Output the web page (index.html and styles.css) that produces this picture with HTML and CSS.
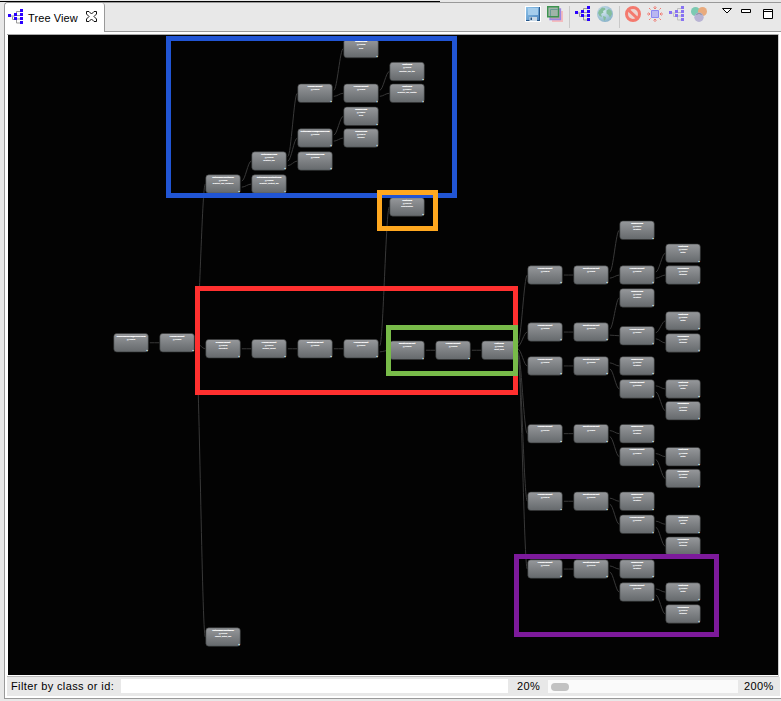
FILE: index.html
```html
<!DOCTYPE html>
<html lang="en">
<head>
<meta charset="utf-8">
<title>Tree View</title>
<link rel="stylesheet" href="styles.css">
</head>
<body>
<svg class="defs" aria-hidden="true">
  <defs>
    <linearGradient id="face" x1="0" y1="0" x2="0" y2="1"><stop offset="0" stop-color="#96989b"/><stop offset="1" stop-color="#65696c"/></linearGradient>
    <linearGradient id="disk" x1="0" y1="0" x2="1" y2="1"><stop offset="0" stop-color="#8fc4ea"/><stop offset="1" stop-color="#4a83bd"/></linearGradient>
    <radialGradient id="sea" cx=".4" cy=".35" r=".7"><stop offset="0" stop-color="#d2e6f0"/><stop offset="1" stop-color="#86b0c8"/></radialGradient>
    <symbol id="tree" viewBox="0 0 16 16">
      <path d="M3 7h4M4.500 7.500V10.500H7M8.500 6V2.500H13M8.500 10V14H13M9 6.500h4M9 10h4" fill="none" stroke="#999" stroke-width="1"/>
      <path d="M0 5h3v3H0zM6 4h3v3H6zM6 8h3v3H6zM12 0h3v3h-3zM12 4h3v3h-3zM12 8h3v3h-3zM12 12h3v3h-3z" fill="#2a00ff"/>
    </symbol>
  </defs>
</svg>
<div class="top-edge"></div>
<main class="panel">
  <header class="tabbar">
    <div class="tab">
      <svg class="ico" viewBox="0 0 16 16"><use href="#tree" width="16" height="16"/></svg>
      <span class="tab-title">Tree View</span>
      <svg class="close" viewBox="0 0 11 11"><path d="M.5.5h2.500l2.500 2.500L8 .5h2.500V3L8 5.500 10.500 8v2.500H8L5.500 8 3 10.500H.5V8L3 5.500.5 3z" fill="#fff" stroke="#111"/></svg>
    </div>
    <div class="tools">
      <svg class="ico" viewBox="0 0 16 16"><path d="M0 0h16v16H0z" fill="#fff"/><path d="M1 1h14v14H2.500L1 13.500z" fill="url(#disk)"/><path d="M1 14.500h14M14.500 1v14" stroke="#27598c"/><path d="M3 2h10v7H3z" fill="#a5cdec"/><path d="M4.500 11h7.500v4H4.500z" fill="#c8d8e6"/><path d="M5.500 11.500h1.500V14H5.500z" fill="#285483"/></svg>
      <svg class="ico layers" viewBox="0 0 16 16"><path d="M5 5h11v11H5z" fill="#f4bcbe"/><path d="M3 3h10.500v10.500H3z" fill="#b9a0b4" stroke="#9c86e4" stroke-width="1.300"/><path d="M.7.700h10.800v10H.7z" fill="#a0b4a8" stroke="#3c934f" stroke-width="1.400"/><path d="M3.500 10V3.500H11" fill="none" stroke="#6a9c94"/></svg>
      <i class="sep"></i>
      <svg class="ico" viewBox="0 0 16 16"><use href="#tree" width="16" height="16"/></svg>
      <svg class="ico globe" viewBox="0 0 16 16"><circle cx="8" cy="8" r="8" fill="url(#sea)"/><path d="M2 4.500l3-3 3 .5.500 1.500L6 5l.5 1.500L4 8l1 3-2.500-1L1 7zM9.500 4.500L12 3l2.500 2 .5 3-2 3.500-1.500-2.500-2-1.500zM6 10l3 1-.5 2.500L7 15z" fill="#84bd9c"/></svg>
      <i class="sep"></i>
      <svg class="ico" viewBox="0 0 16 16"><circle cx="8" cy="8" r="6.500" fill="#ecd5d1" stroke="#f4796e" stroke-width="3"/><path d="M3.500 4l9 8.500" stroke="#f4796e" stroke-width="3"/></svg>
      <svg class="ico" viewBox="0 0 16 16"><path d="M4.500 4.500h7v7h-7z" fill="#b9b7f0" stroke="#8b88f2"/><path d="M8 0v3M6.500 1.500L8 3l1.500-1.500M8 16v-3M6.500 14.500L8 13l1.500 1.500M0 8h3M1.500 6.500L3 8 1.500 9.500M16 8h-3M14.500 6.500L13 8l1.500 1.500M2 2l1.500 1.500M14 2l-1.500 1.500M2 14l1.500-1.500M14 14l-1.500-1.500" fill="none" stroke="#ef7d74"/></svg>
      <svg class="ico faded" viewBox="0 0 16 16"><use href="#tree" width="16" height="16"/></svg>
      <svg class="ico" viewBox="0 0 16 16"><circle cx="4.500" cy="5.500" r="4.500" fill="#7ccab2"/><circle cx="11.500" cy="5.500" r="4.500" fill="#e9ab7e"/><circle cx="8" cy="11.300" r="4.700" fill="#b8b3d4"/><path d="M4.500 8.700a4.500 4.500 0 0 1 7 0A4.500 4.500 0 0 1 8 7.700a4.500 4.500 0 0 1-3.500 1z" fill="#8a929c"/></svg>
      <svg class="win" viewBox="0 0 64 20"><path d="M6.500 2.500h9L11 7z M25.500 3.500h9v3h-9z M47.500 3.500h9v9h-9z M47.500 5.500h9" fill="#fff" stroke="#000"/></svg>
    </div>
  </header>
  <section class="canvas">
    <svg id="graph" viewBox="8 35 770 640"></svg>
  </section>
  <footer class="status">
    <label class="filter-label" for="filter">Filter by class or id:</label>
    <input class="filter" id="filter" type="text">
    <span class="zoom-min">20%</span>
    <div class="slider"><div class="thumb"></div></div>
    <span class="zoom-max">200%</span>
  </footer>
</main>
<script src="tree.js"></script>
</body>
</html>
```
FILE: styles.css
```css
* { box-sizing: border-box; }
body {
  margin: 0;
  height: 701px;
  overflow: hidden;
  display: flex;
  flex-direction: column;
  background: #e8e8e8;
  font: 11px "Liberation Sans", Arial, sans-serif;
  color: #000;
}
.defs { position: absolute; width: 0; height: 0; }
.top-edge { height: 2px; width: 440px; flex: none; border-bottom: 1px solid #000; }
.panel {
  height: 697px;
  margin-left: 4px;
  display: flex;
  flex-direction: column;
  background: #fff;
  border: 1px solid #999;
  border-right: 0;
  border-top-left-radius: 4px;
  padding: 0 1px 2px 2px;
}
.tabbar {
  height: 29px;
  flex: none;
  margin: 0 -1px 0 -2px;
  display: flex;
  background: #e8e8e8;
  border-bottom: 1px solid #999;
  border-top-left-radius: 4px;
}
.tab {
  width: 100px;
  height: 29px;
  flex: none;
  display: flex;
  align-items: center;
  padding: 0 0 2px 3px;
  background: #fff;
  border-right: 1px solid #999;
  border-radius: 4px 3px 0 0;
}
.ico { width: 16px; height: 16px; flex: none; display: block; }
.tab-title { width: 53px; margin: 3px 5px 0 4px; white-space: nowrap; letter-spacing: .1px; }
.close { width: 11px; height: 11px; }
.tools { margin-left: auto; display: flex; align-items: flex-start; padding-top: 3px; }
.tools .ico { margin-right: 6px; }
.sep { width: 1px; height: 22px; margin: 0 5px 0 0; background: #c9c9c9; }
.faded { opacity: .5; }
.win { width: 64px; height: 20px; margin: 0 1px 0 3px; flex: none; }
.canvas {
  width: 771px;
  height: 643px;
  flex: none;
  margin-top: 2px;
  padding-left: 1px;
  border-top: 1px solid #aaa;
  border-bottom: 1px solid #bbb;
  box-shadow: 1px 0 #ccc;
}
.canvas svg { display: block; width: 770px; height: 640px; background: #030303; }
.edge { fill: none; stroke: #383838; stroke-width: 1; }
.face { fill: url(#face); stroke: #303233; stroke-width: .6; }
.name { font-size: 2.3px; font-weight: bold; fill: #fff; stroke: #fff; stroke-width: .22; text-anchor: middle; }
.meta { font-size: 2px; fill: #fff; stroke: #fff; stroke-width: .12; text-anchor: middle; }
.index { font-size: 2.2px; fill: #d6e6ee; stroke: #d6e6ee; stroke-width: .3; text-anchor: end; }
.mark { fill: none; stroke-width: 5; }
.blue { stroke: #2155d4; }
.orange { stroke: #ffa81f; }
.red { stroke: #ff302f; }
.green { stroke: #78bb49; }
.purple { stroke: #7d1a9b; }
.status {
  flex: 1;
  display: flex;
  align-items: center;
  background: #e8e8e8;
  padding: 0 0 1px 4px;
  letter-spacing: .38px;
  white-space: nowrap;
}
.filter-label { width: 110px; flex: none; }
.filter { width: 387px; height: 14px; border: 0; padding: 0 2px; background: #fff; outline: 0; font: inherit; }
.zoom-min { width: 31px; margin-left: 9px; }
.slider { width: 190px; height: 13px; padding: 3px 3px 2px; background: #fafafa; }
.thumb { width: 18px; height: 8px; border-radius: 4px; background: #c2c2c2; }
.zoom-max { margin-left: 6px; }
```
FILE: tree.js
```js
const W = 34.5, H = 18.5;
// Each view: class name, column x, row y, id (optional), children.
const v = (name, x, y, id, ...kids) => ({ name, x, y, id, kids });

const row = (y, imgY, subY, textY, checkY) =>
  v("LinearLayout", 527.8, y, "",
    v("RelativeLayout", 573.8, y, "",
      v("ImageView", 619.8, imgY, "id/option"),
      v("LinearLayout", 619.8, subY, "",
        v("TextView", 665.8, textY, "id/title"),
        v("CheckBox", 665.8, checkY, "id/toggle"))));

const root =
  v("PhoneWindow$DecorView", 113.8, 333.5, "",
    v("LinearLayout", 159.8, 333.5, "",
      v("ActionBarContainer", 205.8, 174.8, "id/action_bar_container",
        v("ActionBarView", 251.8, 151.8, "id/action_bar",
          v("LinearLayout", 297.8, 84, "",
            v("ImageView", 343.8, 39.3, "id/up"),
            v("LinearLayout", 343.8, 84, "",
              v("TextView", 389.8, 62.3, "id/action_bar_title"),
              v("TextView", 389.8, 84, "id/action_bar_subtitle"))),
          v("ActionBarView$HomeView", 297.8, 128.8, "",
            v("ImageView", 343.8, 107, "id/up"),
            v("ImageView", 343.8, 128.8, "id/home")),
          v("ActionMenuView", 297.8, 151.8, "")),
        v("ActionBarContextView", 251.8, 174.8, "id/action_context_bar")),
      v("FrameLayout", 205.8, 339.5, "id/content",
        v("LinearLayout", 251.8, 339.5, "id/main_layout",
          v("RelativeLayout", 297.8, 339.5, "",
            v("LinearLayout", 343.8, 339.5, "",
              v("TextView", 389.8, 197.7, "id/description"),
              v("RelativeLayout", 389.8, 341, "",
                v("LinearLayout", 435.8, 341, "",
                  v("ListView", 481.8, 341, "id/list_view",
                    row(265.8, 221, 265.8, 244, 265.8),
                    row(322.8, 288.7, 326.5, 311.7, 333.7),
                    row(356.7, 356.7, 379.7, 379.7, 401.4),
                    row(424.4, 424.4, 447.4, 447.4, 469.2),
                    row(492, 492, 515, 515, 537),
                    row(559.8, 559.8, 582.8, 582.8, 604.7)))))))),
      v("ActionBarContainer", 205.8, 627.8, "id/split_action_bar")));

let edges = "", nodes = "", serial = 0;
function draw(n, index) {
  const cx = n.x + W / 2;
  const address = "@41" + (0x9a3c + 373 * serial++).toString(16);
  nodes += `<rect class="face" x="${n.x}" y="${n.y}" width="${W}" height="${H}" rx="3"/>
    <text class="name" x="${cx}" y="${n.y + 3}">${n.name}</text>
    <text class="meta" x="${cx}" y="${n.y + 6.1}">${address}</text>
    <text class="meta" x="${cx}" y="${n.y + 9.2}">${n.id}</text>
    <text class="index" x="${n.x + 33.8}" y="${n.y + 17.6}">${index}</text>`;
  n.kids.forEach((k, i) => {
    const x1 = n.x + W + 1.5, y1 = n.y + H * (i + 1) / (n.kids.length + 1);
    const x2 = k.x - .5, y2 = n.kids.length === 1 ? y1 : k.y + H / 2;
    const a = x1 + (x2 - x1) * .35, b = x1 + (x2 - x1) * .65;
    edges += `<path class="edge" d="M${x1} ${y1}C${a} ${y1} ${b} ${y2} ${x2} ${y2}"/>`;
    draw(k, i);
  });
}
draw(root, 0);

const marks = [
  ["blue", 166, 36, 291, 162], ["orange", 377, 190, 61, 41],
  ["red", 195, 286, 323, 109], ["green", 386, 325, 132, 51],
  ["purple", 514, 554, 205, 83]
].map(([c, x, y, w, h]) =>
  `<rect class="mark ${c}" x="${x + 2.5}" y="${y + 2.5}" width="${w - 5}" height="${h - 5}"/>`).join("");
document.getElementById("graph").innerHTML = edges + nodes + marks;
```
